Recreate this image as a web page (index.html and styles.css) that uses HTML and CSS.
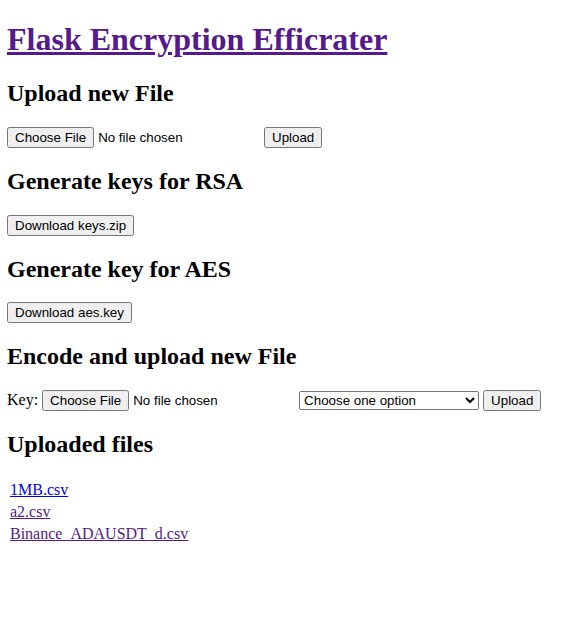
FILE: index.html
```html
<!DOCTYPE html>
<html>
<head>
<meta charset="utf-8">
<title>Flask Encryption Efficrater</title>
<link rel="stylesheet" href="styles.css">
</head>
<body class="page">
<h1 class="title"><a class="visited" href="#">Flask Encryption Efficrater</a></h1>
<h2 class="sec">Upload new File</h2>
<form class="frm">
<input class="ctl" type="file" name="file">
<input class="ctl" type="submit" value="Upload">
</form>
<h2 class="sec">Generate keys for RSA</h2>
<form class="frm"><input class="ctl" type="submit" value="Download keys.zip"></form>
<h2 class="sec">Generate key for AES</h2>
<form class="frm"><input class="ctl" type="submit" value="Download aes.key"></form>
<h2 class="sec">Encode and upload new File</h2>
<form class="frm">
Key: <input class="ctl" type="file" name="key">
<select class="ctl sel" name="opt"><option>Choose one option</option></select>
<input class="ctl" type="submit" value="Upload">
</form>
<h2 class="sec">Uploaded files</h2>
<table class="files">
<tr><td><a class="link" href="#">1MB.csv</a></td></tr>
<tr><td><a class="visited" href="#">a2.csv</a></td></tr>
<tr><td><a class="visited" href="#">Binance_ADAUSDT_d.csv</a></td></tr>
</table>
</body>
</html>
```
FILE: styles.css
```css
.page {
  margin: 0 8px 8px 7px;
  font-family: "Liberation Serif", serif;
  font-size: 16px;
  color: #000;
  background: #fff;
}
.title {
  font-size: 32px;
  margin: 21.44px 0;
}
.sec {
  font-size: 24px;
  margin: 19.92px 0;
}
.frm {
  margin: 0;
}
.ctl {
  font-family: "Liberation Sans", Arial, sans-serif;
  font-size: 13.3333px;
}
.sel {
  width: 180px;
}
.visited {
  color: #551a8b;
}
.link {
  color: #0000ee;
}
.files td {
  padding: 1px;
}
```
